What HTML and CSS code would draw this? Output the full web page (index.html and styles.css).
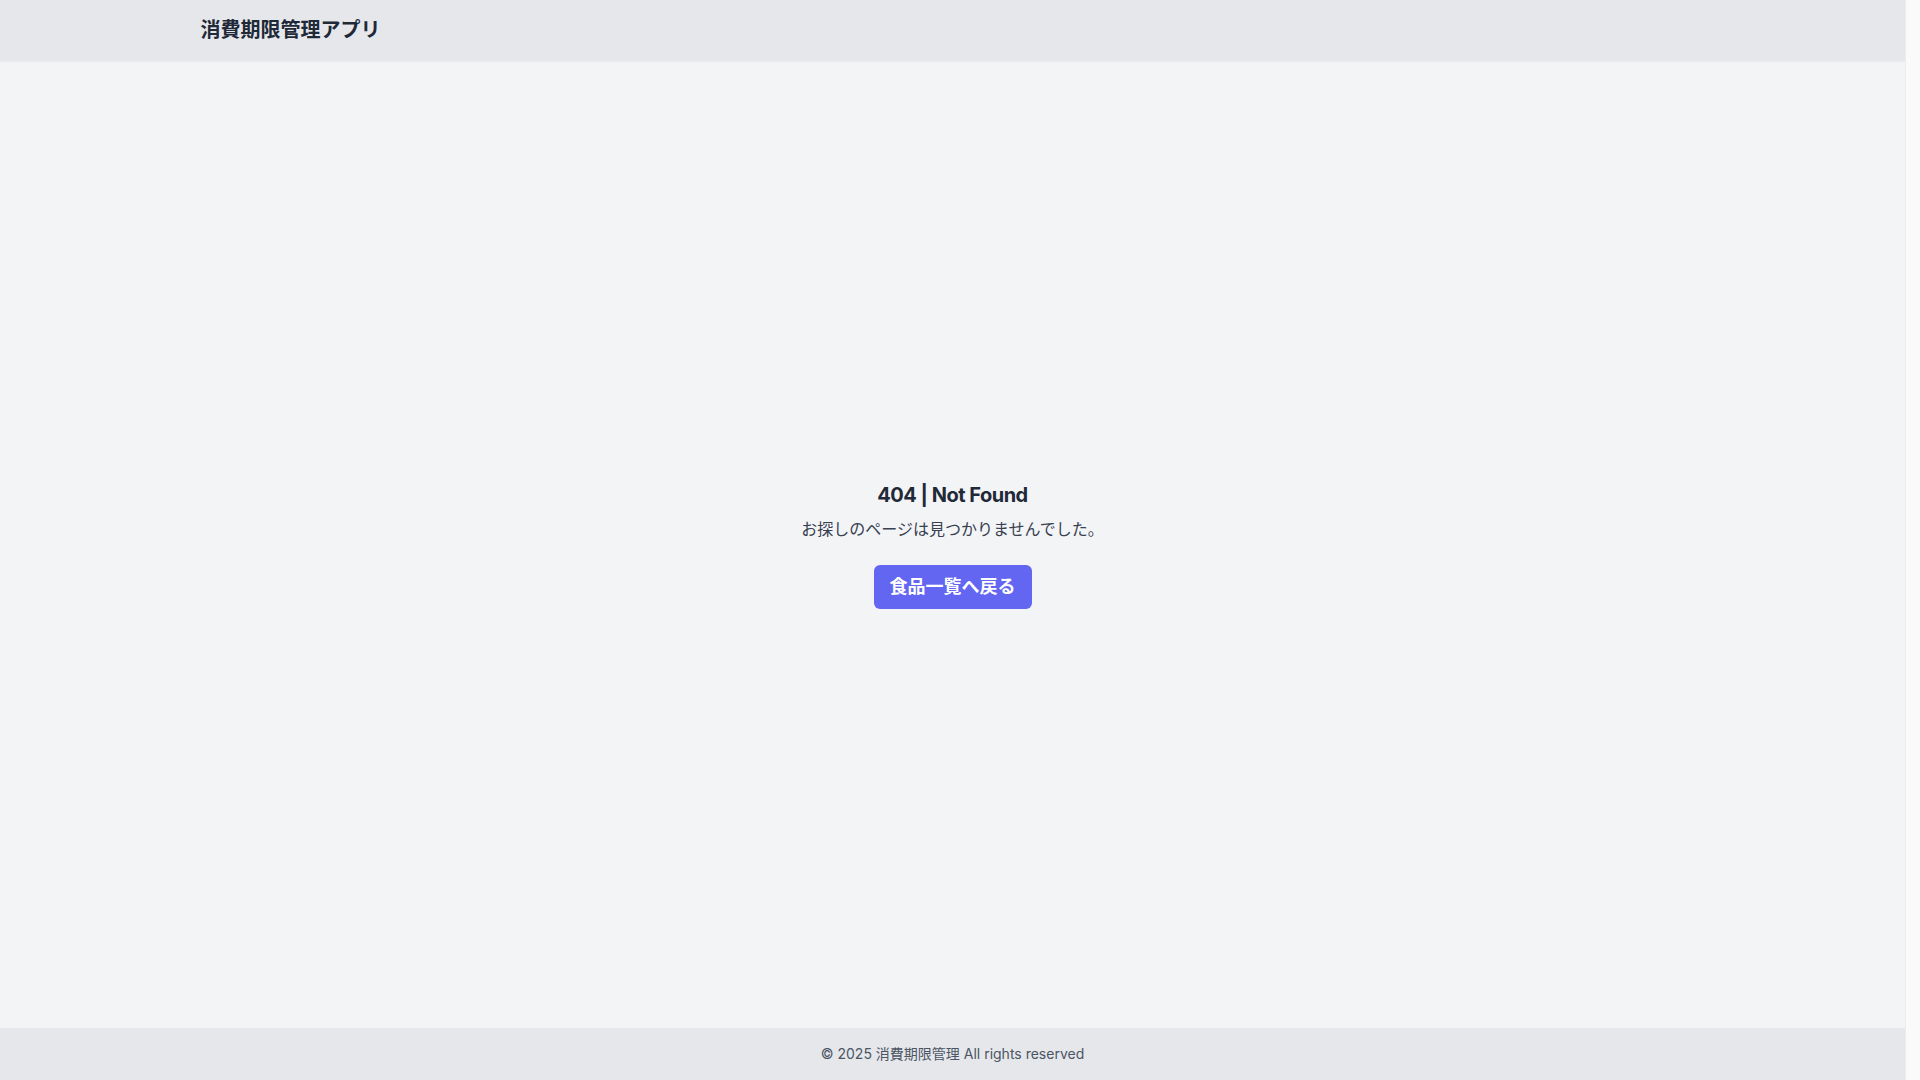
FILE: index.html
```html
<!DOCTYPE html>
<html lang="ja">
<head>
<meta charset="utf-8">
<title>404 | Not Found</title>
<link rel="stylesheet" href="styles.css">
</head>
<body>
<div class="page">
  <header class="site-header">
    <div class="container">
      <h1 class="brand">消費期限管理アプリ</h1>
    </div>
  </header>
  <main class="main">
    <div class="notfound">
      <h2 class="nf-title">404 | Not Found</h2>
      <p class="nf-text">お探しのページは見つかりませんでした。</p>
      <a class="btn" href="#">食品一覧へ戻る</a>
    </div>
  </main>
  <footer class="site-footer">
    <p class="copy">© 2025 消費期限管理 All rights reserved</p>
  </footer>
</div>
<div class="scrolltrack" aria-hidden="true"></div>
</body>
</html>
```
FILE: styles.css
```css
* {
  box-sizing: border-box;
}
html, body {
  height: 100%;
}
body {
  margin: 0;
  display: flex;
  font-family: Inter, "Noto Sans CJK JP", sans-serif;
  background: #f3f4f6;
  color: #1f2937;
  overflow: hidden;
}
.page {
  flex: 1;
  min-width: 0;
  min-height: 100vh;
  display: flex;
  flex-direction: column;
}
.scrolltrack {
  flex: 0 0 15px;
  background: #fafafa;
  border-left: 1px solid #ececec;
}
.site-header {
  background: #e5e7eb;
  box-shadow: 0 1px 2px rgba(0, 0, 0, 0.05);
  padding: 16px 0 17px;
}
.container {
  max-width: 1536px;
  margin: 0 auto;
  padding: 0 16px;
}
.brand {
  margin: 0;
  font-size: 20px;
  line-height: 28px;
  font-weight: 700;
  color: #1f2937;
}
.main {
  flex: 1;
  display: flex;
  align-items: center;
  justify-content: center;
}
.notfound {
  display: flex;
  flex-direction: column;
  align-items: center;
  text-align: center;
}
.nf-title {
  margin: 0 0 8px;
  font-size: 20px;
  line-height: 28px;
  font-weight: 700;
  letter-spacing: -0.5px;
  color: #1f2937;
}
.nf-text {
  margin: 0;
  font-size: 16px;
  line-height: 24px;
  color: #374151;
}
.btn {
  margin-top: 24px;
  display: inline-block;
  background: #6366f1;
  color: #ffffff;
  text-decoration: none;
  font-size: 18px;
  line-height: 28px;
  font-weight: 600;
  padding: 8px 16px;
  border-radius: 6px;
}
.site-footer {
  background: #e5e7eb;
  padding: 16px 0;
  text-align: center;
}
.copy {
  margin: 0;
  font-size: 14px;
  line-height: 20px;
  color: #4b5563;
}
```
